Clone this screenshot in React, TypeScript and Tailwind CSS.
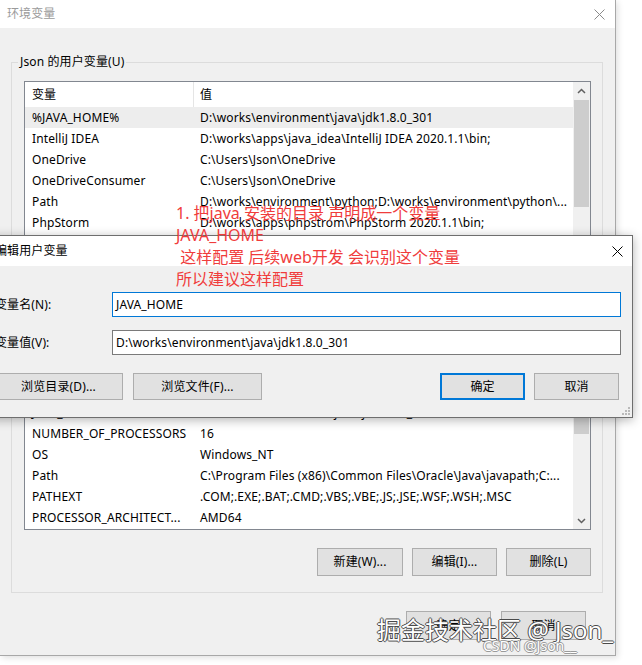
import React from "react";

type Row = [string, string];

const userRows: Row[] = [
	["%JAVA_HOME%", "D:\\works\\environment\\java\\jdk1.8.0_301"],
	["IntelliJ IDEA", "D:\\works\\apps\\java_idea\\IntelliJ IDEA 2020.1.1\\bin;"],
	["OneDrive", "C:\\Users\\Json\\OneDrive"],
	["OneDriveConsumer", "C:\\Users\\Json\\OneDrive"],
	["Path", "D:\\works\\environment\\python;D:\\works\\environment\\python\\..."],
	["PhpStorm", "D:\\works\\apps\\phpstrom\\PhpStorm 2020.1.1\\bin;"],
	["TEMP", "C:\\Users\\Json\\AppData\\Local\\Temp"],
];

const systemRows: Row[] = [
	["ComSpec", "C:\\Windows\\system32\\cmd.exe"],
	["DriverData", "C:\\Windows\\System32\\Drivers\\DriverData"],
	["JAVA_HOME", "D:\\works\\environment\\java\\jdk1.8.0_301"],
	["NUMBER_OF_PROCESSORS", "16"],
	["OS", "Windows_NT"],
	["Path", "C:\\Program Files (x86)\\Common Files\\Oracle\\Java\\javapath;C:..."],
	["PATHEXT", ".COM;.EXE;.BAT;.CMD;.VBS;.VBE;.JS;.JSE;.WSF;.WSH;.MSC"],
	["PROCESSOR_ARCHITECT...", "AMD64"],
];

function CloseX({ className }: { className?: string }) {
	return (
		<svg width="11" height="11" viewBox="0 0 11 11" className={className}>
			<path d="M0.5 0.5l10 10M10.5 0.5l-10 10" stroke="currentColor" strokeWidth="1" />
		</svg>
	);
}

function Chevron({ down }: { down?: boolean }) {
	return (
		<svg width="9" height="6" viewBox="0 0 9 6" className="text-[#606060]">
			<path
				d={down ? "M1 1l3.5 3.5L8 1" : "M1 5l3.5-3.5L8 5"}
				fill="none"
				stroke="currentColor"
				strokeWidth="1.5"
			/>
		</svg>
	);
}

function Grip() {
	return (
		<svg width="8" height="8" viewBox="0 0 8 8" className="text-[#b9b9b9]">
			<rect x="6" y="0" width="2" height="2" fill="currentColor" />
			<rect x="3" y="3" width="2" height="2" fill="currentColor" />
			<rect x="6" y="3" width="2" height="2" fill="currentColor" />
			<rect x="0" y="6" width="2" height="2" fill="currentColor" />
			<rect x="3" y="6" width="2" height="2" fill="currentColor" />
			<rect x="6" y="6" width="2" height="2" fill="currentColor" />
		</svg>
	);
}

type BtnProps = {
	children: React.ReactNode;
	className?: string;
	primary?: boolean;
};

const Btn = ({ children, className = "", primary }: BtnProps) => {
	return (
		<button
			type="button"
			className={`flex items-center justify-center bg-[#e1e1e1] ${
				primary ? "border-2 border-[#0078d7]" : "border border-[#adadad]"
			} ${className}`}
		>
			{children}
		</button>
	);
};

type ListViewProps = {
	rows: Row[];
	className: string;
	thumbClass: string;
	selected?: number;
};

const ListView = ({ rows, className, thumbClass, selected }: ListViewProps) => {
	return (
		<div className={`flex border border-[#828790] bg-white ${className}`}>
			<div className="min-w-0 flex-1 overflow-hidden">
				<div className="flex h-[25px]">
					<div className="flex w-[169px] items-center border-r border-[#e5e5e5] pl-[7px]">变量</div>
					<div className="flex items-center pl-[6px]">值</div>
				</div>
				{rows.map(([name, value], i) => (
					<div
						key={name + i}
						className={`flex h-[21px] leading-[21px] ${i === selected ? "bg-[#ededed]" : ""}`}
					>
						<div className="w-[169px] shrink-0 overflow-hidden whitespace-nowrap pl-[7px]">{name}</div>
						<div className="min-w-0 flex-1 overflow-hidden whitespace-nowrap pl-[6px]">{value}</div>
					</div>
				))}
			</div>
			<div className="flex w-[17px] flex-col bg-[#f0f0f0]">
				<div className="flex h-[17px] items-center justify-center">
					<Chevron />
				</div>
				<div className={`mx-[1px] bg-[#cdcdcd] ${thumbClass}`} />
				<div className="flex-1" />
				<div className="flex h-[17px] items-center justify-center">
					<Chevron down />
				</div>
			</div>
		</div>
	);
};

export default function App() {
	return (
		<div className="relative h-[665px] w-[642px] overflow-hidden bg-white text-[12px] tracking-[0.12px] text-black [font-family:'Noto_Sans','Noto_Sans_CJK_SC',sans-serif]">
			{/* 环境变量 window, inactive */}
			<div className="flex h-[656px] w-[616px] flex-col border-r border-b border-[#a8a8a8] bg-[#f0f0f0] shadow-[2px_2px_6px_rgba(0,0,0,0.12)]">
				<div className="flex h-[28px] shrink-0 items-center justify-between bg-white pr-[10px] pl-[7px]">
					<span className="text-[#9a9a9a]">环境变量</span>
					<CloseX className="text-[#8a8a8a]" />
				</div>
				<div className="pt-[25px] pr-[12px] pl-[11px]">
					<fieldset className="border border-[#dcdcdc] pt-[10px] pr-[11px] pb-[10px] pl-[12px]">
						<legend className="-ml-[6px] px-[2px] leading-[18px]">Json 的用户变量(U)</legend>
						<ListView rows={userRows} selected={0} className="h-[170px]" thumbClass="mt-[1px] h-[107px]" />
						<div className="mt-[9px] flex justify-end gap-[9px]">
							<Btn className="h-[27px] w-[86px]">新建(N)...</Btn>
							<Btn className="h-[27px] w-[85px]">编辑(E)...</Btn>
							<Btn className="h-[27px] w-[85px]">删除(D)</Btn>
						</div>
					</fieldset>
					<fieldset className="mt-[8px] border border-[#dcdcdc] pt-[10px] pr-[11px] pb-[16px] pl-[12px]">
						<legend className="-ml-[6px] px-[2px] leading-[18px]">系统变量(S)</legend>
						<ListView rows={systemRows} className="h-[196px]" thumbClass="mt-[38px] h-[44px]" />
						<div className="mt-[18px] flex justify-end gap-[9px]">
							<Btn className="h-[28px] w-[86px]">新建(W)...</Btn>
							<Btn className="h-[28px] w-[85px]">编辑(I)...</Btn>
							<Btn className="h-[28px] w-[85px]">删除(L)</Btn>
						</div>
					</fieldset>
					<div className="mt-[18px] flex justify-end gap-[10px] pr-[17px]">
						<Btn className="h-[29px] w-[85px]">确定</Btn>
						<Btn className="h-[29px] w-[85px]">取消</Btn>
					</div>
				</div>
			</div>

			{/* 编辑用户变量 dialog, active, over the window */}
			<div className="absolute top-[235px] left-[-14px] flex h-[183px] w-[647px] flex-col border border-[#6e6e6e] bg-[#f0f0f0] shadow-[0_2px_10px_rgba(0,0,0,0.3)]">
				<div className="flex h-[30px] shrink-0 items-center justify-between bg-white pr-[9px] pl-[8px]">
					<span>编辑用户变量</span>
					<CloseX className="text-black" />
				</div>
				<div className="flex flex-col pt-[26px] pr-[11px] pl-[8px]">
					<div className="flex items-center">
						<span className="w-[117px] shrink-0">变量名(N):</span>
						<div className="flex h-[25px] flex-1 items-center border border-[#0078d7] bg-white pl-[3px]">JAVA_HOME</div>
					</div>
					<div className="mt-[13px] flex items-center">
						<span className="w-[117px] shrink-0">变量值(V):</span>
						<div className="flex h-[25px] flex-1 items-center border border-[#7a7a7a] bg-white pl-[3px]">
							D:\works\environment\java\jdk1.8.0_301
						</div>
					</div>
					<div className="mt-[18px] mr-[2px] -ml-[1px] flex">
						<Btn className="h-[27px] w-[129px]">浏览目录(D)...</Btn>
						<Btn className="ml-[10px] h-[27px] w-[129px]">浏览文件(F)...</Btn>
						<div className="flex-1" />
						<Btn primary className="h-[27px] w-[85px]">确定</Btn>
						<Btn className="ml-[9px] h-[27px] w-[85px]">取消</Btn>
					</div>
				</div>
				<div className="absolute right-[2px] bottom-[2px] flex">
					<Grip />
				</div>
			</div>

			{/* red annotation */}
			<div className="absolute top-[202px] left-[176px] text-[16px] leading-[22px] tracking-normal whitespace-pre text-[#f03c3c]">
				<div>1. 把java 安装的目录 声明成一个变量</div>
				<div>JAVA_HOME</div>
				<div> 这样配置 后续web开发 会识别这个变量</div>
				<div>所以建议这样配置</div>
			</div>

			{/* watermarks */}
			<div className="absolute top-[614px] left-[377px] text-[24px] leading-[32px] tracking-normal whitespace-pre text-white [text-shadow:1px_0_#4a4a4a,-1px_0_#4a4a4a,0_1px_#4a4a4a,0_-1px_#4a4a4a]">
				掘金技术社区 @ Json_
			</div>
			<div className="absolute top-[637px] left-[483px] text-[14px] leading-[18px] tracking-normal whitespace-pre text-white [text-shadow:1px_0_#9a9a9a,-1px_0_#9a9a9a,0_1px_#9a9a9a,0_-1px_#9a9a9a]">
				CSDN @Json__
			</div>
		</div>
	);
}
